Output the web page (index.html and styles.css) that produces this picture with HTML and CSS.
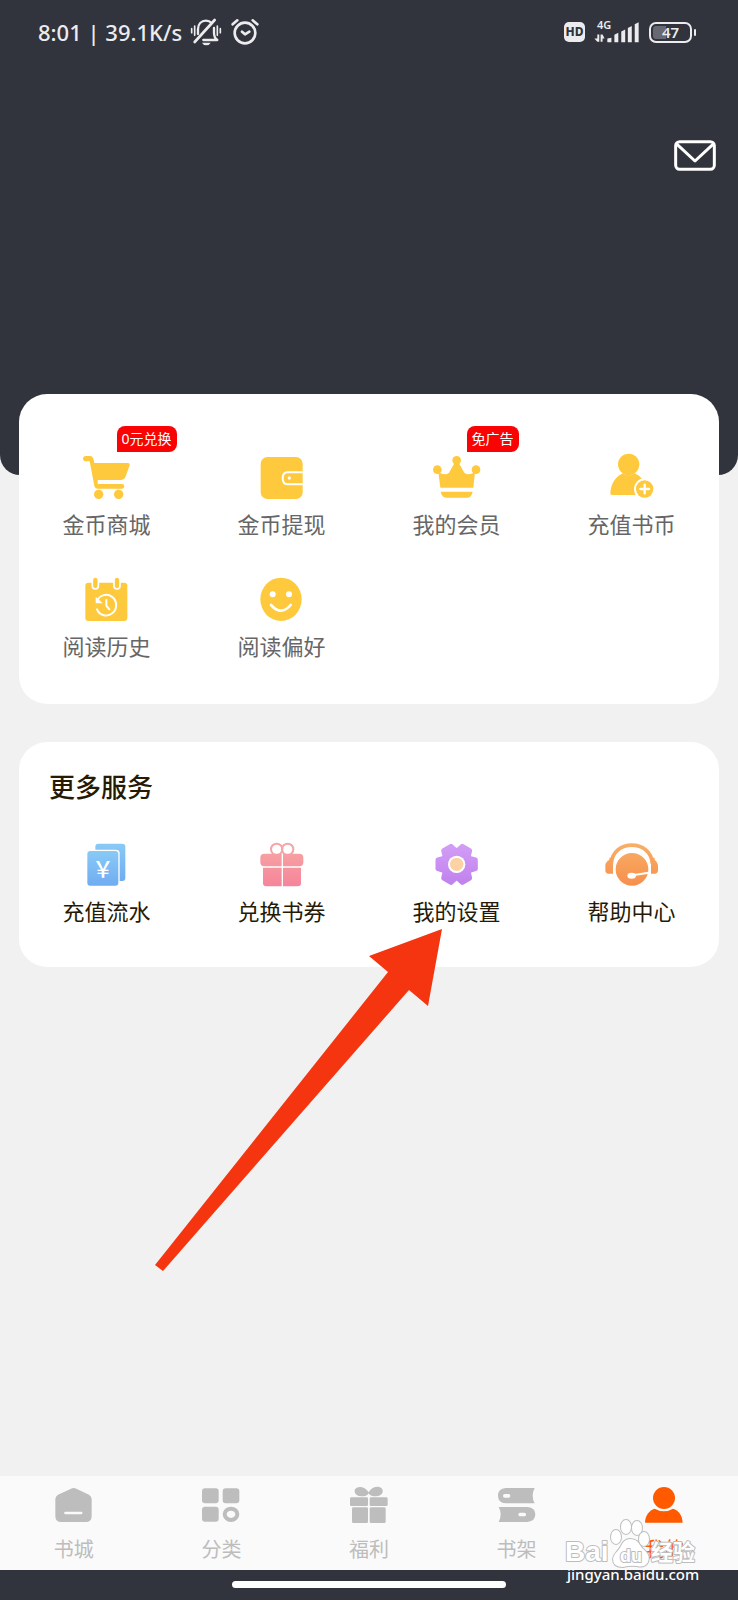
FILE: index.html
```html
<!DOCTYPE html>
<html lang="zh-CN">
<head>
<meta charset="utf-8">
<meta name="viewport" content="width=device-width, initial-scale=1">
<title>我的</title>
<link rel="stylesheet" href="styles.css">
</head>
<body>
<header class="header">
  <div class="status">
    <span class="status-text">8:01 | 39.1K/s</span>
    <svg class="ic-bell" viewBox="0 0 96 84" aria-hidden="true">
      <g fill="none" stroke="currentColor" stroke-width="7" stroke-linecap="round" stroke-linejoin="round">
        <path d="M24 48V34C24 18 34 8 48 8c8 0 13 3 17 7M40 66h42c-8-6-10-12-10-22V30"/>
        <path d="M14 72 74 6" stroke-width="8"/>
        <path d="M5 32v12M14 24v28M91 32v12M82 24v28" stroke-width="5"/>
      </g>
      <path d="M36 74h26q-4 8-13 8t-13-8z" fill="currentColor"/>
    </svg>
    <svg class="ic-alarm" viewBox="0 0 84 84" aria-hidden="true">
      <g fill="none" stroke="currentColor" stroke-width="8" stroke-linecap="round" stroke-linejoin="round">
        <circle cx="42" cy="45" r="31"/><path d="M5 19 19 7M79 19 65 7M33 41l9 8 13-8"/>
      </g>
    </svg>
    <span class="hd">HD</span>
    <span class="signal">
      <span class="net">4G</span>
      <svg class="ic-signal" viewBox="0 0 138 64" aria-hidden="true">
        <g fill="currentColor">
          <path d="M40 50 52 48V62H42Q38 62 40 50zM61 39l12-6v29H61zM82 29l12-6v39H82zM102 18l12-6v50h-12zM123 7l12-6v61h-12z"/>
          <path d="M9 38h6v22h-6L0 50h9zM19 38h6l6 12h-6v10h-6z"/>
        </g>
      </svg>
    </span>
    <span class="battery"><span>47</span></span>
  </div>
  <button class="mail" type="button" aria-label="消息">
    <svg viewBox="0 0 126 93" aria-hidden="true"><g fill="none" stroke="currentColor" stroke-width="9" stroke-linejoin="round" stroke-linecap="round"><rect x="5" y="5" width="116" height="83" rx="12"/><path d="m10 14 53 49 53-49"/></g></svg>
  </button>
</header>

<main class="main">
  <section class="card card-top" aria-label="常用功能">
    <ul class="grid">
      <li><a class="item" href="#mall">
        <svg class="icon yellow" viewBox="0 0 180 144" aria-hidden="true"><path d="M27 12H40Q47 12 49 20L52 33H152Q159 33 158 40L145 76Q142 84 133 84H62V96H136Q142 97 142 103T136 110H62Q54 110 52 101L38 28H27Q18 27 18 20T27 12Z"/><circle cx="65" cy="127" r="14"/><circle cx="125" cy="127" r="14"/></svg>
        <span>金币商城</span><b class="tag">0元兑换</b></a></li>
      <li><a class="item" href="#cash">
        <svg class="icon yellow" viewBox="0 0 180 144" aria-hidden="true"><rect x="26" y="15" width="126" height="126" rx="20"/><path d="M152 61H107Q92 61 92 79T107 97H152" fill="none" stroke="#fff" stroke-width="6"/><circle cx="112" cy="78" r="5" fill="#fff"/></svg>
        <span>金币提现</span></a></li>
      <li><a class="item" href="#vip">
        <svg class="icon yellow" viewBox="0 0 180 144" aria-hidden="true"><circle cx="31" cy="53" r="13"/><circle cx="89" cy="25" r="13"/><circle cx="147" cy="53" r="13"/><path d="M34 60Q54 72 66 62L83 32H95L112 62Q124 72 144 60L139 107H40ZM41 119H137Q134 137 120 137H60Q44 137 41 119Z"/></svg>
        <span>我的会员</span><b class="tag">免广告</b></a></li>
      <li><a class="item" href="#recharge">
        <svg class="icon yellow" viewBox="0 0 180 144" aria-hidden="true"><circle cx="80" cy="37" r="32"/><path d="M30 129Q25 129 25 123C27 92 42 74 62 64Q80 76 98 64Q112 70 121 82L100 129Z"/><circle cx="128" cy="111" r="32" fill="#fff"/><circle cx="128" cy="111" r="26"/><path d="M128 98v26M115 111h26" stroke="#fff" stroke-width="7" stroke-linecap="round"/></svg>
        <span>充值书币</span></a></li>
      <li><a class="item" href="#history">
        <svg class="icon yellow" viewBox="0 0 180 144" aria-hidden="true"><rect x="25" y="26" width="126" height="115" rx="9"/><g stroke="#fff" stroke-width="5"><rect x="46" y="9" width="18" height="36" rx="9"/><rect x="111" y="9" width="18" height="36" rx="9"/></g><g fill="none" stroke="#fff" stroke-width="6" stroke-linecap="round"><path d="M60 81A30 31 0 1 1 60 106M88 78v17l9 11"/></g><path d="M56 68v20h21z" fill="#fff"/></svg>
        <span>阅读历史</span></a></li>
      <li><a class="item" href="#preference">
        <svg class="icon yellow" viewBox="0 0 180 144" aria-hidden="true"><ellipse cx="87" cy="76" rx="62" ry="65"/><circle cx="62" cy="61" r="9" fill="#fff"/><circle cx="111" cy="61" r="9" fill="#fff"/><path d="M57 93Q87 127 116 93" fill="none" stroke="#fff" stroke-width="8" stroke-linecap="round"/></svg>
        <span>阅读偏好</span></a></li>
    </ul>
  </section>

  <section class="card card-more">
    <h2 class="title">更多服务</h2>
    <ul class="grid dark">
      <li><a class="item" href="#records">
        <svg class="icon" viewBox="0 0 180 144" aria-hidden="true"><defs><linearGradient id="blue" x1="0" y1="0" x2="0" y2="1"><stop offset="0" stop-color="#88caf6"/><stop offset="1" stop-color="#70acf2"/></linearGradient></defs><rect x="55" y="14" width="90" height="112" rx="9" fill="url(#blue)"/><rect x="27" y="32" width="101" height="111" rx="11" fill="#fff"/><rect x="31" y="36" width="93" height="104" rx="9" fill="url(#blue)"/><text class="yen" x="78" y="114">￥</text></svg>
        <span>充值流水</span></a></li>
      <li><a class="item" href="#voucher">
        <svg class="icon" viewBox="0 0 180 144" aria-hidden="true"><defs><linearGradient id="pink" gradientUnits="userSpaceOnUse" x1="0" y1="10" x2="0" y2="142"><stop offset="0" stop-color="#f7a9a5"/><stop offset="1" stop-color="#f5849a"/></linearGradient></defs><g fill="none" stroke="#f5a5a5" stroke-width="6"><circle cx="74" cy="31" r="17"/><circle cx="107" cy="31" r="17"/></g><path d="M37 44H142Q154 44 154 56V70Q154 82 142 82H37Q25 82 25 70V56Q25 44 37 44ZM33 86H147V132Q147 142 137 142H43Q33 142 33 132Z" fill="url(#pink)"/><path d="M91 44v99" stroke="#fff" stroke-width="4"/></svg>
        <span>兑换书券</span></a></li>
      <li><a class="item" href="#settings">
        <svg class="icon" viewBox="0 0 180 144" aria-hidden="true"><defs><linearGradient id="violet" x1="0" y1="0" x2="0" y2="1"><stop offset="0" stop-color="#d19cf5"/><stop offset="1" stop-color="#c183ee"/></linearGradient></defs><path transform="translate(89 76)" d="M56-13V13L39 18 35 25 39 41 17 54 4 42H-4L-17 54-39 41-35 25-39 18-56 13V-13L-39-18-35-25-39-41-17-54-4-42H4L17-54 39-41 35-25 39-18Z" fill="url(#violet)" stroke="url(#violet)" stroke-width="15" stroke-linejoin="round"/><circle cx="89" cy="76" r="26" fill="#fff"/><circle cx="89" cy="76" r="20" fill="#fcd2a4"/></svg>
        <span>我的设置</span></a>
        <svg class="arrow" viewBox="0 0 290 345" aria-hidden="true"><path d="M288 1 215 28 234 44 1 337 9 343 255 62 274 78Z" fill="#f53510"/></svg></li>
      <li><a class="item" href="#help">
        <svg class="icon" viewBox="0 0 180 144" aria-hidden="true"><defs><linearGradient id="orange" gradientUnits="userSpaceOnUse" x1="0" y1="13" x2="0" y2="140"><stop offset="0" stop-color="#f7b067"/><stop offset="1" stop-color="#f78f4d"/></linearGradient></defs><circle cx="90" cy="91" r="49" fill="url(#orange)"/><path d="M28 74C32 0 147 0 151 74" fill="none" stroke="url(#orange)" stroke-width="11"/><path d="M22 56H33V104H18Q10 103 10 94V78Q10 70 22 62ZM147 56H158V62Q168 70 168 78V94Q168 103 160 104H147Z" fill="url(#orange)"/><path d="M92 109 140 101" stroke="#fff" stroke-width="6"/><ellipse cx="89" cy="110" rx="13" ry="9" fill="#fff"/></svg>
        <span>帮助中心</span></a></li>
    </ul>
  </section>
</main>

<footer class="footer">
  <nav class="tabs">
    <a class="tab" href="#store"><svg viewBox="0 0 144 120" aria-hidden="true"><path d="M63 11Q71 7 79 11L117 29Q125 34 125 42V93Q125 111 107 111H34Q16 111 16 93V42Q16 34 24 29Z"/><path d="M46 84H94" stroke="#fafafa" stroke-width="7" stroke-linecap="round"/></svg><span>书城</span></a>
    <a class="tab" href="#category"><svg viewBox="0 0 144 120" aria-hidden="true"><rect x="15" y="10" width="50" height="45" rx="9"/><rect x="77" y="10" width="50" height="45" rx="9"/><rect x="15" y="65" width="50" height="45" rx="9"/><ellipse cx="102" cy="88" rx="19" ry="17" fill="none" stroke="currentColor" stroke-width="12"/></svg><span>分类</span></a>
    <a class="tab" href="#welfare"><svg viewBox="0 0 144 120" aria-hidden="true"><path d="M71 22C60 2 35 2 30 13S36 34 48 34H55Q67 33 71 25Q75 33 87 34H94C106 34 117 25 112 13S82 2 71 22Z"/><rect x="15" y="37" width="54" height="26" rx="4"/><rect x="74" y="37" width="54" height="26" rx="4"/><rect x="21" y="67" width="48" height="47" rx="4"/><rect x="74" y="67" width="48" height="47" rx="4"/></svg><span>福利</span></a>
    <a class="tab" href="#shelf"><svg viewBox="0 0 144 120" aria-hidden="true"><path d="M38 9H125Q113 32 125 55H38Q15 53 15 32T38 9ZM17 66H104Q127 68 127 88T104 111H17Q29 88 17 66Z"/><g fill="#fafafa"><rect x="30" y="27" width="22" height="11" rx="5"/><rect x="76" y="83" width="23" height="11" rx="5"/></g></svg><span>书架</span></a>
    <a class="tab active" href="#me" aria-current="page"><svg viewBox="0 0 144 120" aria-hidden="true"><circle cx="72" cy="39" r="33"/><path d="M15 113C16 90 28 76 44 71Q72 87 99 71C116 76 127 90 128 113Z"/></svg><span>我的</span></a>
  </nav>
  <div class="homebar"><i></i></div>
  <svg class="watermark" viewBox="0 0 144 70" aria-hidden="true">
    <g class="wm-logo">
      <text class="wm-latin" x="5" y="43">Bai</text>
      <path d="M70 21C77 21 79 25 82 30C88 35 90 38 88 44Q85 50 77 48Q70 47 63 49Q53 49 53 41C54 35 58 34 61 28Q64 21 70 21Z"/>
      <ellipse cx="56" cy="19" rx="5" ry="7"/><ellipse cx="66" cy="9" rx="5" ry="7"/><ellipse cx="77" cy="10" rx="5" ry="7"/><ellipse cx="84" cy="21" rx="5" ry="7"/>
      <text class="wm-du" x="60" y="44">du</text>
      <text class="wm-cjk" x="91" y="42">经验</text>
    </g>
    <text class="wm-url" x="7" y="62">jingyan.baidu.com</text>
  </svg>
</footer>
</body>
</html>
```
FILE: styles.css
```css
* {
  box-sizing: border-box;
}

body {
  margin: 0;
  min-height: 100vh;
  display: flex;
  flex-direction: column;
  background: #f1f1f1;
  color: #666;
  font-family: "Noto Sans", "Noto Sans CJK SC", sans-serif;
}

a {
  color: inherit;
  text-decoration: none;
}

svg {
  display: block;
}

ul {
  margin: 0;
  padding: 0;
  list-style: none;
}

.header {
  display: flex;
  flex-direction: column;
  padding-bottom: 304px;
  border-radius: 0 0 20px 20px;
  background: #31333d;
  color: #fff;
}

.status {
  display: flex;
  align-items: center;
  height: 64px;
  padding: 0 46px 0 38px;
  color: #ececee;
}

.status-text {
  font-size: 22px;
  font-weight: 500;
  line-height: 32px;
}

.ic-bell {
  width: 32px;
  height: 28px;
  margin-left: 8px;
}

.ic-alarm {
  width: 28px;
  height: 28px;
  margin-left: 9px;
}

.hd {
  width: 21px;
  height: 20px;
  margin-left: auto;
  border-radius: 5px;
  background: #ececee;
  color: #31333d;
  font-size: 12px;
  font-weight: 800;
  line-height: 20px;
  text-align: center;
}

.signal {
  position: relative;
  margin-left: 9px;
}

.ic-signal {
  width: 46px;
  height: 21px;
}

.net {
  position: absolute;
  left: 3px;
  top: -3px;
  font-size: 11px;
  font-weight: 600;
  line-height: 12px;
}

.battery {
  position: relative;
  width: 43px;
  height: 21px;
  margin-left: 9px;
  border: 2px solid #ececee;
  border-radius: 7px;
  background: linear-gradient(90deg, #676871 36%, transparent 36%) content-box;
  padding: 2px;
  font-size: 15px;
  font-weight: 600;
  line-height: 13px;
  text-align: center;
}

.battery::after {
  content: "";
  position: absolute;
  top: 5px;
  right: -6px;
  width: 2px;
  height: 7px;
  border-radius: 1px;
  background: #ececee;
}

.mail {
  align-self: flex-end;
  margin: 76px 22px 0 0;
  padding: 0;
  border: 0;
  background: none;
  color: #fff;
}

.mail svg {
  width: 42px;
  height: 31px;
}

.main {
  display: flex;
  flex-direction: column;
  gap: 38px;
  margin-top: -81px;
  padding: 0 19px 40px;
}

.card {
  border-radius: 28px;
  background: #fff;
}

.card-top {
  padding: 58px 0 42px;
}

.card-more {
  padding: 27px 0 40px;
}

.title {
  margin: 0 0 34px;
  padding: 0 30px;
  color: #261a05;
  font-size: 26px;
  font-weight: 500;
  line-height: 36px;
}

.grid {
  display: grid;
  grid-template-columns: repeat(4, 1fr);
  row-gap: 34px;
}

.grid li {
  position: relative;
}

.dark {
  color: #261a05;
}

.item {
  display: flex;
  flex-direction: column;
  align-items: center;
  gap: 8px;
  font-size: 22px;
  line-height: 32px;
}

.icon {
  width: 60px;
  height: 48px;
}

.yellow {
  fill: #fec93d;
}

.yen {
  fill: #fff;
  font-family: "Noto Sans CJK SC", sans-serif;
  font-size: 64px;
  font-weight: 500;
  text-anchor: middle;
}

.tag {
  position: absolute;
  left: calc(50% + 10px);
  top: -26px;
  height: 26px;
  padding: 0 5px;
  border-radius: 8px 8px 8px 0;
  background: #f80404;
  color: #fff;
  font-size: 14px;
  font-weight: 400;
  line-height: 26px;
  white-space: nowrap;
}

.arrow {
  position: absolute;
  right: 100px;
  top: 89px;
  width: 290px;
  height: 345px;
  pointer-events: none;
}

.footer {
  position: sticky;
  bottom: 0;
  margin-top: auto;
}

.tabs {
  display: grid;
  grid-template-columns: repeat(5, 1fr);
  padding: 9px 0 5px;
  background: #fafafa;
}

.tab {
  display: flex;
  flex-direction: column;
  align-items: center;
  gap: 10px;
  color: #bdbdbd;
  font-size: 20px;
  line-height: 30px;
}

.tab svg {
  width: 48px;
  height: 40px;
  fill: currentColor;
}

.active {
  color: #ff5a00;
}

.homebar {
  display: flex;
  justify-content: center;
  padding: 11px 0 12px;
  background: #31333d;
}

.homebar i {
  width: 37%;
  height: 7px;
  border-radius: 4px;
  background: #fff;
}

.watermark {
  position: absolute;
  right: 34px;
  bottom: 12px;
  width: 144px;
  height: 70px;
}

.wm-logo {
  fill: #fff;
  stroke: #bdbdbd;
  stroke-width: 2px;
  stroke-linejoin: round;
  paint-order: stroke;
}

.wm-latin {
  font: bold 28px "Liberation Sans", sans-serif;
}

.wm-du {
  font: bold 18px "Liberation Sans", sans-serif;
}

.wm-cjk {
  font: bold 22px "Noto Sans CJK SC", sans-serif;
}

.wm-url {
  fill: #fff;
  font: 500 15px "Noto Sans", sans-serif;
}
```
